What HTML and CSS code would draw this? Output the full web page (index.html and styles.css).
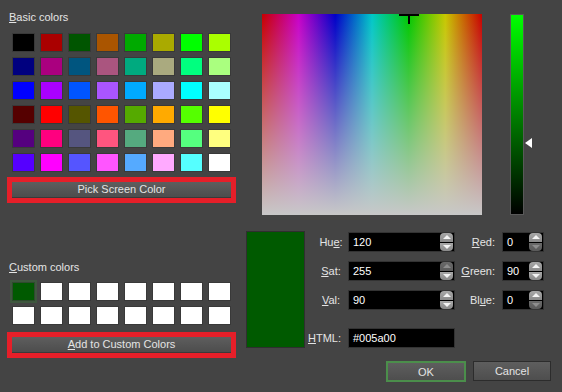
FILE: index.html
```html
<!DOCTYPE html>
<html lang="en">
<head>
    <meta charset="UTF-8">
    <title>Select Color</title>
    <link rel="stylesheet" href="styles.css">
</head>
<body>
    <div class="dialog">
        <div class="left">
            <div class="label"><u>B</u>asic colors</div>
            <div class="wells basic">
                <div class="well" style="background:#000000"></div>
                <div class="well" style="background:#aa0000"></div>
                <div class="well" style="background:#005500"></div>
                <div class="well" style="background:#aa5500"></div>
                <div class="well" style="background:#00aa00"></div>
                <div class="well" style="background:#aaaa00"></div>
                <div class="well" style="background:#00ff00"></div>
                <div class="well" style="background:#aaff00"></div>

                <div class="well" style="background:#00007f"></div>
                <div class="well" style="background:#aa007f"></div>
                <div class="well" style="background:#00557f"></div>
                <div class="well" style="background:#aa557f"></div>
                <div class="well" style="background:#00aa7f"></div>
                <div class="well" style="background:#aaaa7f"></div>
                <div class="well" style="background:#00ff7f"></div>
                <div class="well" style="background:#aaff7f"></div>

                <div class="well" style="background:#0000ff"></div>
                <div class="well" style="background:#aa00ff"></div>
                <div class="well" style="background:#0055ff"></div>
                <div class="well" style="background:#aa55ff"></div>
                <div class="well" style="background:#00aaff"></div>
                <div class="well" style="background:#aaaaff"></div>
                <div class="well" style="background:#00ffff"></div>
                <div class="well" style="background:#aaffff"></div>

                <div class="well" style="background:#550000"></div>
                <div class="well" style="background:#ff0000"></div>
                <div class="well" style="background:#555500"></div>
                <div class="well" style="background:#ff5500"></div>
                <div class="well" style="background:#55aa00"></div>
                <div class="well" style="background:#ffaa00"></div>
                <div class="well" style="background:#55ff00"></div>
                <div class="well" style="background:#ffff00"></div>

                <div class="well" style="background:#55007f"></div>
                <div class="well" style="background:#ff007f"></div>
                <div class="well" style="background:#55557f"></div>
                <div class="well" style="background:#ff557f"></div>
                <div class="well" style="background:#55aa7f"></div>
                <div class="well" style="background:#ffaa7f"></div>
                <div class="well" style="background:#55ff7f"></div>
                <div class="well" style="background:#ffff7f"></div>

                <div class="well" style="background:#5500ff"></div>
                <div class="well" style="background:#ff00ff"></div>
                <div class="well" style="background:#5555ff"></div>
                <div class="well" style="background:#ff55ff"></div>
                <div class="well" style="background:#55aaff"></div>
                <div class="well" style="background:#ffaaff"></div>
                <div class="well" style="background:#55ffff"></div>
                <div class="well" style="background:#ffffff"></div>
            </div>
            <div class="marker marker-pick"><button class="btn">Pick Screen Color</button></div>

            <div class="label custom-label"><u>C</u>ustom colors</div>
            <div class="wells custom">
                <div class="well selected" style="background:#005a00"></div>
                <div class="well"></div>
                <div class="well"></div>
                <div class="well"></div>
                <div class="well"></div>
                <div class="well"></div>
                <div class="well"></div>
                <div class="well"></div>
                <div class="well"></div>
                <div class="well"></div>
                <div class="well"></div>
                <div class="well"></div>
                <div class="well"></div>
                <div class="well"></div>
                <div class="well"></div>
                <div class="well"></div>
            </div>
            <div class="marker marker-add"><button class="btn"><u>A</u>dd to Custom Colors</button></div>
        </div>

        <div class="right">
            <div class="picker-row">
                <div class="picker">
                    <div class="cross-h"></div>
                    <div class="cross-v"></div>
                </div>
                <div class="lum-wrap">
                    <div class="lum"></div>
                    <div class="lum-arrow"></div>
                </div>
            </div>

            <div class="info-row">
                <div class="preview"></div>
                <div class="fields">
                    <div class="flabel hsv">Hu<u>e</u>:</div>
                    <div class="spin"><span class="val">120</span><span class="arrows"><i class="arrow up"></i><i class="arrow down"></i></span></div>
                    <div class="flabel rgb"><u>R</u>ed:</div>
                    <div class="spin"><span class="val">0</span><span class="arrows"><i class="arrow up"></i><i class="arrow down off"></i></span></div>

                    <div class="flabel hsv"><u>S</u>at:</div>
                    <div class="spin"><span class="val">255</span><span class="arrows"><i class="arrow up off"></i><i class="arrow down"></i></span></div>
                    <div class="flabel rgb"><u>G</u>reen:</div>
                    <div class="spin"><span class="val">90</span><span class="arrows"><i class="arrow up"></i><i class="arrow down"></i></span></div>

                    <div class="flabel hsv"><u>V</u>al:</div>
                    <div class="spin"><span class="val">90</span><span class="arrows"><i class="arrow up"></i><i class="arrow down"></i></span></div>
                    <div class="flabel rgb">Bl<u>u</u>e:</div>
                    <div class="spin"><span class="val">0</span><span class="arrows"><i class="arrow up"></i><i class="arrow down off"></i></span></div>

                    <div class="flabel html-label"><u>H</u>TML:</div>
                    <div class="edit">#005a00</div>
                </div>
            </div>

            <div class="buttons">
                <button class="dbtn ok">OK</button>
                <button class="dbtn">Cancel</button>
            </div>
        </div>
    </div>
</body>
</html>
```

FILE: styles.css
```css
* {
    margin: 0;
    padding: 0;
    box-sizing: border-box;
}

body {
    width: 562px;
    height: 392px;
    overflow: hidden;
    background-color: #444444;
    color: #e4e4e4;
    font-family: "Liberation Sans", Arial, sans-serif;
    font-size: 11px;
}

.dialog {
    display: grid;
    grid-template-columns: 246px 1fr;
    height: 100%;
}

/* Left column: colour wells */
.left {
    display: flex;
    flex-direction: column;
    padding-top: 11px;
}

.label {
    line-height: 13px;
    padding-left: 9px;
}

.custom-label {
    margin-top: 58px;
}

.wells {
    display: grid;
    grid-template-columns: repeat(8, 21px);
    gap: 7px;
    margin-left: 13px;
}

.basic {
    margin-top: 10px;
}

.custom {
    margin-top: 9px;
}

.well {
    height: 17px;
    background: #ffffff;
    box-shadow: 0 0 0 1px #393939;
}

.well.selected {
    box-shadow: 0 0 0 1px #2f4a2f, 0 0 0 3px #3e573e;
}

.marker {
    width: 229px;
    margin-left: 7px;
    border: 5px solid #e61f29;
}

.marker-pick {
    margin-top: 6px;
}

.marker-add {
    margin-top: 8px;
}

.btn {
    display: block;
    width: 100%;
    height: 16px;
    border: none;
    border-bottom: 1px solid #3a3a3a;
    background: linear-gradient(#5e5e5e, #4d4d4d);
    color: #e4e4e4;
    font: inherit;
    line-height: 15px;
}

/* Right column: picker */
.right {
    display: flex;
    flex-direction: column;
}

.picker-row {
    display: flex;
    align-items: flex-start;
    margin: 14px 0 0 16px;
}

.picker {
    position: relative;
    width: 220px;
    height: 201px;
    background:
        linear-gradient(to bottom, rgba(200, 200, 200, 0), rgb(200, 200, 200)),
        linear-gradient(to right, #c80000, #c800c8 16.67%, #0000c8 33.33%, #00c8c8 50%, #00c800 66.67%, #c8c800 83.33%, #c80000);
}

.cross-h {
    position: absolute;
    left: 137px;
    top: 0;
    width: 20px;
    height: 2px;
    background: #000;
}

.cross-v {
    position: absolute;
    left: 146px;
    top: 0;
    width: 2px;
    height: 10px;
    background: #000;
}

.lum-wrap {
    position: relative;
    width: 24px;
    height: 201px;
    margin-left: 28px;
}

.lum {
    width: 14px;
    height: 201px;
    border: 1px solid #595959;
    background: linear-gradient(#00ff00, #000000);
}

.lum-arrow {
    position: absolute;
    left: 15px;
    top: 124px;
    width: 0;
    height: 0;
    border-top: 5px solid transparent;
    border-bottom: 5px solid transparent;
    border-right: 7px solid #ffffff;
}

/* Right column: values */
.info-row {
    display: flex;
    margin-top: 16px;
}

.preview {
    width: 59px;
    height: 117px;
    background: #005a00;
    border: 1px solid #2f2f2f;
}

.fields {
    display: grid;
    grid-template-columns: 32px 107px 47px 42px;
    grid-template-rows: 20px 20px 20px 29px;
    row-gap: 9px;
    margin: 1px 0 0 11px;
}

.flabel {
    line-height: 20px;
    white-space: nowrap;
}

.hsv {
    text-align: center;
    padding-right: 2px;
}

.rgb {
    text-align: right;
    padding-right: 7px;
}

.html-label {
    grid-column: 1;
    justify-self: end;
    align-self: end;
    margin-right: 7px;
}

.spin {
    display: flex;
    align-items: stretch;
    background: #000;
    border: 1px solid #333333;
}

.val {
    flex: 1;
    padding-left: 4px;
    line-height: 18px;
    color: #ffffff;
}

.arrows {
    display: flex;
    flex-direction: column;
    gap: 1px;
    width: 13px;
    margin: 0 1px 0 0;
}

.arrow {
    flex: 1;
    display: flex;
    align-items: center;
    justify-content: center;
    background: linear-gradient(#a8a8a8, #8a8a8a);
}

.arrow.up {
    border-radius: 4px 4px 0 0;
}

.arrow.down {
    border-radius: 0 0 4px 4px;
}

.arrow::after {
    content: "";
    width: 0;
    height: 0;
    border-left: 4px solid transparent;
    border-right: 4px solid transparent;
}

.arrow.up::after {
    border-bottom: 4px solid #f4f4f4;
}

.arrow.down::after {
    border-top: 4px solid #f4f4f4;
}

.arrow.off {
    background: linear-gradient(#6a6a6a, #5a5a5a);
}

.arrow.off.up::after {
    border-bottom-color: #8e8e8e;
}

.arrow.off.down::after {
    border-top-color: #8e8e8e;
}

.edit {
    grid-column: 2;
    align-self: end;
    height: 20px;
    background: #000;
    border: 1px solid #333333;
    padding-left: 4px;
    line-height: 18px;
    color: #ffffff;
}

.buttons {
    display: flex;
    justify-content: flex-end;
    align-items: flex-start;
    gap: 7px;
    margin-top: 13px;
    padding-right: 11px;
}

.dbtn {
    width: 78px;
    height: 20px;
    border: 1px solid #2c2c2c;
    background: linear-gradient(#5e5e5e, #4e4e4e);
    color: #e4e4e4;
    font: inherit;
}

.dbtn.ok {
    width: 80px;
    height: 21px;
    border: 2px solid #4b8e4b;
}
```
